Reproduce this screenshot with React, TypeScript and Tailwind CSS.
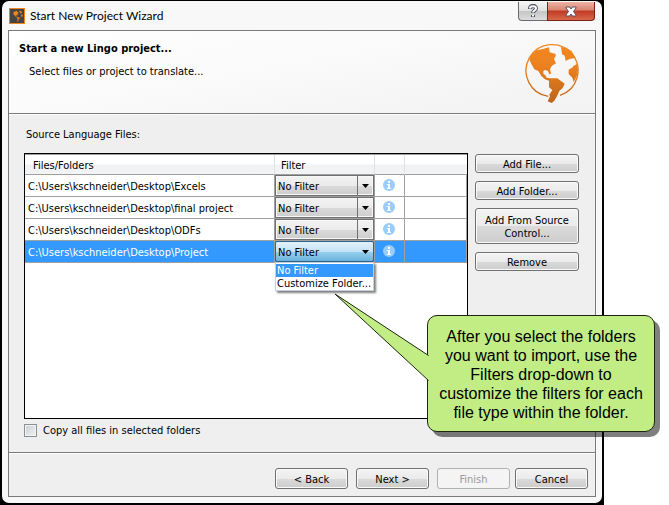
import { useState } from "react";
import type { ReactNode } from "react";

const PATH = "C:\\Users\\kschneider\\Desktop\\";
const files = ["Excels", "final project", "ODFs", "Project"];
const silver =
  "border-[#707070] bg-[linear-gradient(#f3f3f3_0%,#ebebeb_50%,#dadada_51%,#cdcdcd_100%)]";

function Globe({ className, plain }: { className: string; plain?: boolean }) {
  return (
    <svg viewBox="225 129 165 183" className={className} aria-hidden="true">
      <defs>
        <linearGradient id="globe" x1="0" y1="129" x2="0" y2="312" gradientUnits="userSpaceOnUse">
          <stop offset="0" stopColor="#f5881f" />
          <stop offset="0.4" stopColor="#ea8020" />
          <stop offset="1" stopColor="#bd6417" />
        </linearGradient>
      </defs>
      {!plain && (
        <path
          d="M298 289A78 78 0 1 1 333 286"
          fill="none"
          stroke="url(#globe)"
          strokeWidth="4"
        />
      )}
      <g fill="url(#globe)">
        <path d="M241 178L248 164L262 151L281 147L300 142L302 157L320 162L320 168L315 177L321 190L309 197L303 207L306 221L301 223L297 213L288 210L283 213L283 221L289 226L293 233L303 235H325L347 251L341 264L331 273L324 289L316 302L308 309L296 304L303 289L301 284L310 270L300 262V242L288 238L277 228L268 213L256 208L247 192Z" />
        <path d="M336 141L352 143L368 154L380 173L362 177L350 183L347 167L339 163Z" />
        <path d="M384 192L387 210L383 229L374 246L370 233L359 222V209L371 202L374 197Z" />
      </g>
    </svg>
  );
}

function PushButton({ children, className, disabled }: { children: ReactNode; className: string; disabled?: boolean }) {
  return (
    <button
      type="button"
      disabled={disabled}
      className={`rounded-[3px] border pt-[2px] text-center leading-[13px] ${
        disabled ? "border-[#adb2b5] bg-[#f4f4f4] text-[#9a9a9a]" : `${silver} shadow-[inset_0_0_0_1px_#fafafa]`
      } ${className}`}
    >
      {children}
    </button>
  );
}

function FilterSelect({ name, open }: { name: string; open?: boolean }) {
  return (
    <div className="relative h-[21px]">
      <select
        aria-label={`Filter for ${name}`}
        className={`block h-full w-full appearance-none border pl-[2px] pt-[2px] leading-[13px] text-black outline-none ${
          open
            ? "rounded-[2px] border-[#2c628b] bg-[linear-gradient(#e2f2fb_0%,#c2e3f5_50%,#98d0ee_51%,#68b3db_100%)]"
            : `${silver} shadow-[inset_0_0_0_1px_#f8f8f8]`
        }`}
      >
        <option>No Filter</option>
        <option>Customize Folder...</option>
      </select>
      <span
        className={`pointer-events-none absolute inset-y-px right-px flex w-4 items-center justify-center ${
          open ? "" : "border-l border-[#707070]"
        }`}
      >
        <svg viewBox="0 0 7 4" className="h-1 w-[7px]" aria-hidden="true">
          <path d="M0 0H7L3.5 4Z" />
        </svg>
      </span>
      {open && (
        <ul
          role="listbox"
          aria-label="Filter choices"
          className="absolute left-0 top-full z-10 w-full border border-[#c5cfe0] bg-white pt-px leading-[13px] shadow-[2px_2px_2px_#00000080]"
        >
          <li role="option" aria-selected="true" className="bg-[#3399ff] pl-px text-white">
            No Filter
          </li>
          <li role="option" aria-selected="false" className="whitespace-nowrap pl-px text-black">
            Customize Folder...
          </li>
        </ul>
      )}
    </div>
  );
}

function InfoIcon() {
  return (
    <svg viewBox="0 0 12 12" className="mx-auto block size-3" role="img" aria-label="Info">
      <circle cx="6" cy="6" r="6" fill="#99ccff" />
      <path d="M5 2H7V4H5ZM4 5H7V9H8V10H4V9H5V6H4Z" fill="#fff" />
    </svg>
  );
}

function FilesTable() {
  const head = "border-r border-[#dfe1e4] pt-px text-left font-normal";
  return (
    <div className="min-w-0 flex-1 border border-black bg-white">
      <table className="w-full table-fixed border-separate border-spacing-0 border-t border-[#a0a0a0]">
        <colgroup>
          <col />
          <col className="w-[100px]" />
          <col className="w-[30px]" />
          <col className="w-[62px]" />
        </colgroup>
        <thead>
          <tr className="h-5 bg-[linear-gradient(#ffffff_0%,#ffffff_45%,#f1f2f4_50%,#f3f4f6_100%)]">
            <th className={`${head} border-b border-b-[#a0a0a0] pl-2`}>Files/Folders</th>
            <th className={`${head} border-b border-b-[#a0a0a0] pl-[6px]`}>Filter</th>
            <th className={`${head} border-b border-b-[#a0a0a0]`} />
            <th className="border-b border-[#a0a0a0]" />
          </tr>
        </thead>
        <tbody>
          {files.map((file, i) => {
            const selected = i === files.length - 1;
            const cell = "border-b border-r border-[#a0a0a0]";
            return (
              <tr key={file} className={`h-[22px] ${selected ? "bg-[#3399ff] text-white" : ""}`}>
                <td className={`${cell} whitespace-nowrap pl-[3px] pt-[2px]`}>{PATH + file}</td>
                <td className={`${cell} p-0`}>
                  <FilterSelect name={file} open={selected} />
                </td>
                <td className={`${cell} pb-[2px] pr-px`}>
                  <InfoIcon />
                </td>
                <td className={cell} />
              </tr>
            );
          })}
        </tbody>
      </table>
    </div>
  );
}

function Callout() {
  return (
    <aside className="absolute left-[427px] top-[315px] z-20 w-[228px] rounded-[10px] border border-[#1c2410] bg-[#c2ed85] px-2 pb-[9px] pt-[11px] text-center font-['Liberation_Sans',Arial,sans-serif] text-[16px] leading-[19px] text-black shadow-[5px_5px_0_#00000080]">
      <svg viewBox="0 0 95 90" className="absolute -left-[94px] -top-[23px] h-[90px] w-[95px]" aria-hidden="true">
        <path d="M94.500 62.500L1 1L94.500 87.500" fill="#c2ed85" stroke="#1c2410" />
      </svg>
      After you select the folders
      <br />
      you want to import, use the
      <br />
      Filters drop-down to
      <br />
      customize the filters for each
      <br />
      file type within the folder.
    </aside>
  );
}

export default function App() {
  const [copyAll, setCopyAll] = useState(false);
  return (
    <div className="relative flex min-h-screen bg-white pr-[65px] font-['DejaVu_Sans_Condensed','DejaVu_Sans',Tahoma,sans-serif] text-[11px] leading-[13px] text-black">
      <main className="flex min-w-0 flex-1 flex-col bg-black pb-[2px] pl-[2px] pr-[2px] pt-px">
        <div className="flex flex-1 flex-col rounded-[7px] bg-[#f8f8f8] px-[6px] pb-[6px]">
          <header className="flex h-[29px] items-start">
            <span className="ml-px mt-[7px] flex size-4 items-center justify-center border border-[#f58220] bg-[#454545]">
              <Globe plain className="h-3 w-[11px]" />
            </span>
            <h1 className="ml-[5px] mt-[7px] flex-1 font-[Lato,'Segoe_UI',sans-serif] text-[12px] leading-4">
              Start New Project Wizard
            </h1>
            <button
              type="button"
              aria-label="Help"
              className="mt-px flex h-[19px] w-[29px] items-center justify-center rounded-bl-[4px] border border-r-0 border-t-0 border-[#6c6c6c] bg-[linear-gradient(#f4f4f4_0%,#e2e2e2_48%,#c4c4c4_50%,#dddddd_100%)]"
            >
              <svg viewBox="0 0 10 14" className="h-[14px] w-[10px]" aria-hidden="true">
                <path d="M2 5C2 1 8 1 8 4.500C8 6.500 5 6.500 5 9M5 11V13" fill="none" stroke="#4e5162" strokeWidth="4" />
                <path d="M2 4.500C2 1.500 8 1.500 8 4.500C8 6.500 5 6.500 5 8.500M5 11V12.500" fill="none" stroke="#fff" strokeWidth="2" />
              </svg>
            </button>
            <button
              type="button"
              aria-label="Close"
              className="mr-px mt-px flex h-[19px] w-12 items-center justify-center rounded-br-[4px] border border-t-0 border-[#7a2015] bg-[linear-gradient(#eeb3a5_0%,#d98371_45%,#bf3a22_50%,#d7694b_100%)]"
            >
              <svg viewBox="0 0 12 11" className="h-[11px] w-3" aria-hidden="true">
                <path
                  d="M1 1H4.500L6 3L7.500 1H11V2L8.500 5.500L11 9V10H7.500L6 8L4.500 10H1V9L3.500 5.500L1 2Z"
                  fill="#fff"
                  stroke="#545369"
                />
              </svg>
            </button>
          </header>

          <div className="flex flex-1 flex-col border border-[#7a7a7a] bg-[#efefef]">
            <section className="flex h-[83px] justify-between border-b border-[#7a7a7a] bg-[linear-gradient(170deg,#ffffff,#fafafa_45%,#f2f2f2)] pl-[10px] pr-4">
              <div className="pt-[11px]">
                <h2 className="font-bold">Start a new Lingo project...</h2>
                <p className="ml-[10px] mt-[10px]">Select files or project to translate...</p>
              </div>
              <Globe className="mt-3 h-[61px] w-[55px] shrink-0" />
            </section>

            <section className="flex flex-1 flex-col border-t border-white pl-[15px] pr-4 pt-[13px]">
              <h3 className="pl-[2px]">Source Language Files:</h3>
              <div className="mt-3 flex flex-1 gap-[7px]">
                <FilesTable />
                <div className="flex w-[104px] flex-col gap-2 pt-px">
                  <PushButton className="h-[19px]">Add File...</PushButton>
                  <PushButton className="h-[19px]">Add Folder...</PushButton>
                  <PushButton className="h-9">
                    Add From Source
                    <br />
                    Control...
                  </PushButton>
                  <PushButton className="h-[19px]">Remove</PushButton>
                </div>
              </div>
              <label className="flex items-center gap-[6px] self-start pb-[15px] pt-[5px]">
                <input
                  type="checkbox"
                  checked={copyAll}
                  onChange={(e) => setCopyAll(e.target.checked)}
                  className="size-[13px] appearance-none border border-[#8e8f8f] bg-[linear-gradient(135deg,#c8ccd2,#f4f4f4)] shadow-[inset_0_0_0_1px_#f4f4f4] checked:bg-[#3399ff]"
                />
                Copy all files in selected folders
              </label>
            </section>

            <footer className="border-t border-[#7a7a7a]">
              <div className="flex justify-end gap-[5px] border-t border-white pb-[7px] pr-[7px] pt-[14px]">
                <div className="flex gap-2">
                  <PushButton className="h-[21px] w-[73px]">&lt; Back</PushButton>
                  <PushButton className="h-[21px] w-[73px]">Next &gt;</PushButton>
                  <PushButton className="h-[21px] w-[73px]" disabled>
                    Finish
                  </PushButton>
                </div>
                <PushButton className="h-[21px] w-[73px]">Cancel</PushButton>
              </div>
            </footer>
          </div>
        </div>
      </main>
      <Callout />
    </div>
  );
}
